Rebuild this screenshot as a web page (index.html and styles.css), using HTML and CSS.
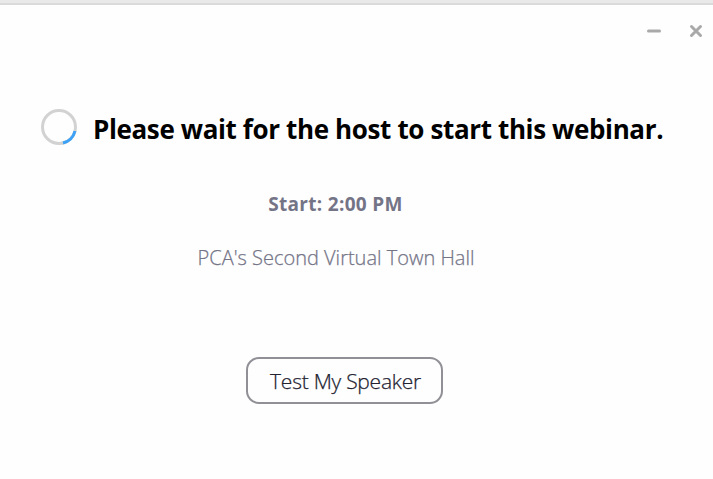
FILE: index.html
```html
<!DOCTYPE html>
<html lang="en">

<head>
    <meta charset="UTF-8">
    <title>Webinar</title>
    <link rel="stylesheet" href="styles.css">
</head>

<body>
    <div class="window">
        <div class="window-controls">
            <svg class="control" width="14" height="14" viewBox="0 0 14 14">
                <path d="M1.5 7H12.5" />
            </svg>
            <svg class="control" width="14" height="14" viewBox="0 0 14 14">
                <path d="M2.5 2.5L11.5 11.5M11.5 2.5L2.5 11.5" />
            </svg>
        </div>

        <div class="status">
            <svg class="spinner" width="36" height="36" viewBox="0 0 36 36">
                <circle class="track" cx="18" cy="18" r="16.5" />
                <path class="progress" d="M34 22A16.5 16.5 0 0 1 22 34" />
            </svg>
            <h1>Please wait for the host to start this webinar.</h1>
        </div>

        <div class="details">
            <p class="start">Start: 2:00 PM</p>
            <p class="topic">PCA's Second Virtual Town Hall</p>
        </div>

        <button class="speaker-btn">Test My Speaker</button>
    </div>
</body>

</html>
```

FILE: styles.css
```css
* {
    box-sizing: border-box;
}

body {
    margin: 0;
    background: #fefefe;
    font-family: "Open Sans", "Noto Sans", sans-serif;
}

.window {
    height: 479px;
    overflow: hidden;
    border-top: 3px solid #e9e9e9;
    box-shadow: inset 0 2px 0 #dadada;
}

.window-controls {
    display: flex;
    justify-content: flex-end;
    gap: 28px;
    padding: 21px 10px 0 0;
}

.control {
    fill: none;
    stroke: #a9a9a9;
    stroke-width: 3;
    stroke-linecap: round;
}

.status {
    display: flex;
    align-items: center;
    height: 36px;
    margin-top: 71px;
    padding-left: 41px;
    gap: 16px;
}

.spinner {
    flex: none;
    fill: none;
    stroke-width: 3;
}

.track {
    stroke: #d2d2d2;
}

.progress {
    stroke: #3da2f5;
}

h1 {
    margin: 4px 0 0;
    font-size: 26px;
    line-height: 36px;
    font-weight: 700;
    letter-spacing: -0.37px;
    white-space: nowrap;
    color: #000;
}

.details {
    width: 672px;
    margin-top: 45px;
    text-align: center;
    color: #747487;
}

p {
    margin: 0;
    line-height: 28px;
    white-space: nowrap;
}

.start {
    padding-right: 1px;
    font-size: 19px;
    font-weight: 700;
    letter-spacing: 0.3px;
}

.topic {
    margin-top: 26px;
    font-size: 20px;
    font-weight: 300;
    -webkit-text-stroke: 0.25px #747487;
}

.speaker-btn {
    display: block;
    width: 197px;
    height: 47px;
    margin: 85px 0 0 246px;
    padding: 0 0 0 2px;
    background: #fefefe;
    border: 2px solid #909096;
    border-radius: 13px;
    font-family: inherit;
    font-size: 21px;
    font-weight: 300;
    letter-spacing: -0.25px;
    -webkit-text-stroke: 0.25px #222230;
    white-space: nowrap;
    color: #222230;
}
```
